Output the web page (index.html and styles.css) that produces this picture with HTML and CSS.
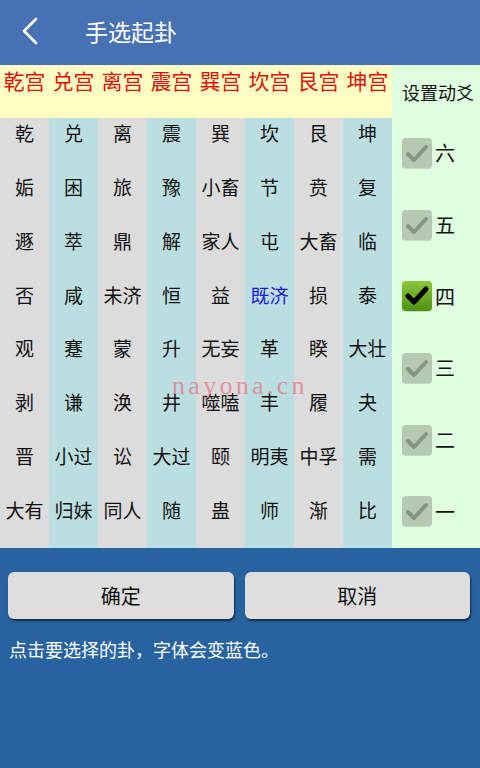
FILE: index.html
```html
<!DOCTYPE html>
<html lang="zh-CN">
<head>
    <meta charset="UTF-8">
    <meta name="viewport" content="width=device-width, initial-scale=1.0">
    <title>手选起卦</title>
    <link rel="stylesheet" href="styles.css">
</head>
<body>
    <div class="header">
        <svg class="back" width="24" height="30" viewBox="0 0 24 30">
            <polyline points="17,3 5,15 17,27" fill="none" stroke="#fff" stroke-width="2.6" stroke-linecap="round" stroke-linejoin="round"/>
        </svg>
        <h1>手选起卦</h1>
    </div>

    <div class="main">
        <!-- 左侧卦表 -->
        <div class="board">
            <div class="palaces">
                <span>乾宫</span><span>兑宫</span><span>离宫</span><span>震宫</span>
                <span>巽宫</span><span>坎宫</span><span>艮宫</span><span>坤宫</span>
            </div>
            <div class="grid">
                <span>乾</span><span>兑</span><span>离</span><span>震</span><span>巽</span><span>坎</span><span>艮</span><span>坤</span>
                <span>姤</span><span>困</span><span>旅</span><span>豫</span><span>小畜</span><span>节</span><span>贲</span><span>复</span>
                <span>遯</span><span>萃</span><span>鼎</span><span>解</span><span>家人</span><span>屯</span><span>大畜</span><span>临</span>
                <span>否</span><span>咸</span><span>未济</span><span>恒</span><span>益</span><span class="picked">既济</span><span>损</span><span>泰</span>
                <span>观</span><span>蹇</span><span>蒙</span><span>升</span><span>无妄</span><span>革</span><span>睽</span><span>大壮</span>
                <span>剥</span><span>谦</span><span>涣</span><span>井</span><span>噬嗑</span><span>丰</span><span>履</span><span>夬</span>
                <span>晋</span><span>小过</span><span>讼</span><span>大过</span><span>颐</span><span>明夷</span><span>中孚</span><span>需</span>
                <span>大有</span><span>归妹</span><span>同人</span><span>随</span><span>蛊</span><span>师</span><span>渐</span><span>比</span>
            </div>
            <div class="watermark">nayona.cn</div>
        </div>

        <!-- 右侧动爻 -->
        <div class="yao">
            <div class="yao-title">设置动爻</div>
            <label class="yao-item"><span class="box"></span>六</label>
            <label class="yao-item"><span class="box"></span>五</label>
            <label class="yao-item"><span class="box on"></span>四</label>
            <label class="yao-item"><span class="box"></span>三</label>
            <label class="yao-item"><span class="box"></span>二</label>
            <label class="yao-item"><span class="box"></span>一</label>
        </div>
    </div>

    <div class="footer">
        <div class="actions">
            <button class="btn">确定</button>
            <button class="btn">取消</button>
        </div>
        <p class="hint">点击要选择的卦，字体会变蓝色。</p>
    </div>
</body>
</html>
```

FILE: styles.css
```css
* {
    box-sizing: border-box;
    margin: 0;
    padding: 0;
}

body {
    width: 480px;
    height: 768px;
    background: #2863a1;
    font-family: "Noto Sans CJK SC", "Noto Sans", sans-serif;
    overflow: hidden;
}

/* 标题栏 */
.header {
    height: 65px;
    background: #4671b3;
    display: flex;
    align-items: center;
    padding-left: 19px;
    padding-bottom: 3px;
}

.header h1 {
    margin-left: 42px;
    color: #fff;
    font-size: 23px;
    font-weight: 400;
}

.main {
    display: flex;
    height: 483px;
}

/* 卦表 */
.board {
    position: relative;
    width: 392px;
}

.palaces {
    height: 53px;
    background: #ffffc4;
    display: grid;
    grid-template-columns: repeat(8, 49px);
    padding-top: 1px;
}

.palaces span {
    text-align: center;
    color: #e0100c;
    font-size: 21px;
    line-height: 28px;
}

.grid {
    height: 430px;
    display: grid;
    grid-template-columns: repeat(8, 49px);
    grid-template-rows: repeat(8, 1fr);
}

.grid span {
    display: flex;
    align-items: center;
    justify-content: center;
    font-size: 19px;
    color: #111;
    background: #dcdcdc;
    padding-bottom: 24px;
}

.grid span:nth-child(2n) {
    background: #bbdfe1;
}

.grid span.picked {
    color: #1a1ae0;
}

.watermark {
    position: absolute;
    left: 172px;
    top: 306px;
    font-family: "Liberation Serif", serif;
    font-size: 26px;
    letter-spacing: 3.3px;
    color: rgba(232, 110, 130, 0.7);
}

/* 动爻 */
.yao {
    flex: 1;
    background: #e0fee0;
    display: flex;
    flex-direction: column;
}

.yao-title {
    height: 53px;
    display: flex;
    align-items: center;
    padding-left: 10px;
    font-size: 18px;
    color: #111;
}

.yao-item {
    flex: 1;
    display: flex;
    align-items: center;
    padding-left: 10px;
    padding-bottom: 2px;
    font-size: 20px;
    color: #111;
}

.box {
    width: 30px;
    height: 30px;
    margin-right: 3px;
    border-radius: 4px;
    background: #b6c9b3 url("data:image/svg+xml,%3Csvg xmlns='http://www.w3.org/2000/svg' viewBox='0 0 30 30'%3E%3Cpolyline points='6,16 12,22 24,9' fill='none' stroke='%23849682' stroke-width='4' stroke-linecap='round' stroke-linejoin='round'/%3E%3C/svg%3E") center/30px 30px no-repeat;
    box-shadow: 0 1px 1px rgba(0,0,0,0.15);
}

.box.on {
    background: url("data:image/svg+xml,%3Csvg xmlns='http://www.w3.org/2000/svg' viewBox='0 0 30 30'%3E%3Cpolyline points='6,15 12,21 24,8' fill='none' stroke='%23000' stroke-width='5' stroke-linecap='round' stroke-linejoin='round'/%3E%3C/svg%3E") center/30px 30px no-repeat,
                linear-gradient(#8cc63a, #4e9212);
}

/* 底部 */
.footer {
    padding: 24px 10px 0 8px;
}

.actions {
    display: flex;
    gap: 11px;
}

.btn {
    flex: 1;
    height: 47px;
    border: none;
    border-radius: 6px;
    background: #dedede;
    box-shadow: 1px 2px 2px rgba(0,0,0,0.55);
    font-family: inherit;
    font-size: 20px;
    color: #111;
}

.hint {
    margin-top: 17px;
    padding-left: 1px;
    color: #fff;
    font-size: 18px;
}
```
